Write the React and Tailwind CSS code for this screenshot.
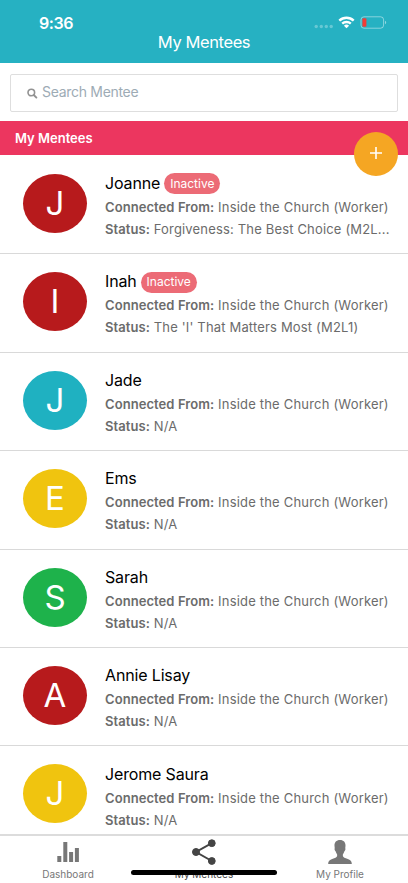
const CONNECTED_FROM = 'Inside the Church (Worker)';

const MENTEES = [
  { name: 'Joanne', color: '#b71a1c', inactive: true, status: 'Forgiveness: The Best Choice (M2L...' },
  { name: 'Inah', color: '#b71a1c', inactive: true, status: "The 'I' That Matters Most (M2L1)" },
  { name: 'Jade', color: '#1fb1c1', status: 'N/A' },
  { name: 'Ems', color: '#f0c40f', status: 'N/A' },
  { name: 'Sarah', color: '#1eb24b', status: 'N/A' },
  { name: 'Annie Lisay', color: '#b71a1c', status: 'N/A' },
  { name: 'Jerome Saura', color: '#f0c40f', status: 'N/A' },
];

function StatusIcons() {
  return (
    <svg width="80" height="28" viewBox="310 8 80 28" fill="none">
      <g fill="#fff" fillOpacity="0.3">
        <circle cx="316.2" cy="26.5" r="1.7" />
        <circle cx="321.3" cy="26.5" r="1.7" />
        <circle cx="326.3" cy="26.5" r="1.7" />
        <circle cx="331.2" cy="26.5" r="1.7" />
      </g>
      <g stroke="#fff" strokeWidth="2.4">
        <path d="M339.3 20.7a10.4 10.4 0 0 1 14.4 0" />
        <path d="M342.2 23.7a6.3 6.3 0 0 1 8.6 0" />
      </g>
      <path d="M346.5 28.3l-2.6-2.5a3.7 3.7 0 0 1 5.2 0z" fill="#fff" />
      <rect x="361" y="16.8" width="22.6" height="11.4" rx="3" stroke="#fff" strokeOpacity="0.45" />
      <rect x="362.4" y="18.2" width="4" height="8.6" rx="1" fill="#f23b37" />
      <path d="M385 20.8c1.6.5 1.6 3 0 3.5z" fill="#fff" fillOpacity="0.5" />
    </svg>
  );
}

function Header() {
  return (
    <header className="h-[63px] bg-[#26b1c2] text-white">
      <div className="flex h-[33px] justify-between pl-[39px] pr-[18px] pt-2">
        <span className="pt-[4px] text-[16px] leading-[22px] font-semibold tracking-[-0.4px]">9:36</span>
        <StatusIcons />
      </div>
      <h1 className="text-center text-[16.5px] leading-[18px] tracking-[-0.4px]">My Mentees</h1>
    </header>
  );
}

function SearchBox() {
  return (
    <div className="h-[58px] px-[10px] pt-[11px]">
      <div className="flex h-[38px] items-center rounded-[2px] border border-[#dedede] pl-[16px]">
        <svg width="11" height="11" viewBox="0 0 11 11" fill="none" stroke="#929292">
          <circle cx="4.3" cy="4.5" r="3.3" strokeWidth="1.6" />
          <path d="M6.8 7l2.6 2.6" strokeWidth="1.9" strokeLinecap="round" />
        </svg>
        <span className="pb-[2px] pl-[4px] text-[14px] leading-5 tracking-[-0.3px] text-[#9dabb5]">
          Search Mentee
        </span>
      </div>
    </div>
  );
}

function MenteeRow({ mentee }) {
  return (
    <li className="flex h-[98.45px] shrink-0 border-b border-[#d9d9d9] pl-[23px]">
      <div
        className="mt-[18px] flex h-[59px] w-[64px] shrink-0 items-center justify-center rounded-[50%] text-[33px] leading-none text-white"
        style={{ backgroundColor: mentee.color }}
      >
        {mentee.name[0]}
      </div>
      <div className="ml-[18px] pt-[15.2px] text-[13px] whitespace-nowrap text-[#6b6b6b]">
        <div className="flex h-[24px] items-center gap-[4px]">
          <span className="text-[16px] tracking-[-0.15px] text-black">{mentee.name}</span>
          {mentee.inactive && (
            <span className="mt-[2px] flex h-[21px] items-center rounded-full bg-[#ec6b76] px-[6px] text-[12px] text-white">
              Inactive
            </span>
          )}
        </div>
        <p className="h-[22px] leading-[25px] tracking-[0.19px]">
          <b className="font-semibold tracking-[0.07px]">Connected From:</b> {CONNECTED_FROM}
        </p>
        <p className="h-[22px] leading-[24px] tracking-[0.17px]">
          <b className="font-semibold tracking-[0.07px]">Status:</b> {mentee.status}
        </p>
      </div>
    </li>
  );
}

function TabBar() {
  return (
    <nav className="relative grid h-[49px] grid-cols-3 border-t-2 border-[#dcdcdc] bg-white text-[10px] text-[#777]">
      <div className="flex flex-col items-center">
        <svg className="mt-[5px]" width="24" height="22" viewBox="0 0 24 22" fill="#777">
          <path d="M1.3 15h4v6h-4zM7.3 1h4v20h-4zM13.1 11h4v10h-4zM18.9 7h4v14h-4z" />
        </svg>
        <span className="mt-[4px] leading-[14px]">Dashboard</span>
      </div>
      <div className="flex flex-col items-center text-[#444]">
        <svg className="mt-[2px]" width="26" height="28" viewBox="0 0 26 28" fill="#444" stroke="#444">
          <path d="M20.8 5.2L5 14l15.8 9" fill="none" strokeWidth="2" />
          <circle cx="5" cy="14" r="3.5" />
          <circle cx="20.8" cy="5.2" r="3.4" />
          <circle cx="20.8" cy="23" r="3.4" />
        </svg>
        <span className="mt-px leading-[14px]">My Mentees</span>
      </div>
      <div className="flex flex-col items-center">
        <svg className="mt-[4px]" width="24" height="24" viewBox="0 0 24 24" fill="#777">
          <path d="M12 0c-3.6 0-5.7 2.3-5.5 5.8.1 1.500.3 2.200.2 2.500-.5.9.2 2.800 1 3.100.3 1.700 1.500 2.500 1.500 3.600 0 1.900-.8 2.500-3 3.200C2.400 19.500.2 20.500.2 24h23.600c0-3.500-2.200-4.500-6-5.800-2.200-.7-3-1.300-3-3.200 0-1.100 1.200-1.900 1.500-3.600.8-.3 1.500-2.200 1-3.100-.1-.3.1-1 .2-2.500C17.700 2.300 15.600 0 12 0z" />
        </svg>
        <span className="mt-[3px] leading-[14px]">My Profile</span>
      </div>
      <div className="absolute top-[34px] left-[131px] h-[5px] w-[146px] rounded-full bg-black" />
    </nav>
  );
}

export default function App() {
  return (
    <div className="flex h-[883px] w-[408px] flex-col overflow-hidden bg-white font-['Inter',sans-serif]">
      <Header />
      <SearchBox />
      <main className="relative flex min-h-0 flex-1 flex-col">
        <h2 className="h-[34px] shrink-0 bg-[#ec365f] pl-[15px] text-[13px] leading-[34px] font-semibold text-white">
          My Mentees
        </h2>
        <button className="absolute top-[11px] right-[10px] flex size-[44px] items-center justify-center rounded-full bg-[#f5a623]">
          <svg className="-mt-[2px]" width="12" height="12" viewBox="0 0 12 12" stroke="#fff" strokeWidth="1.6">
            <path d="M6 0v12M0 6h12" />
          </svg>
        </button>
        <ul className="flex min-h-0 flex-1 flex-col overflow-hidden pt-[0.8px]">
          {MENTEES.map((mentee) => (
            <MenteeRow key={mentee.name} mentee={mentee} />
          ))}
        </ul>
      </main>
      <TabBar />
    </div>
  );
}
